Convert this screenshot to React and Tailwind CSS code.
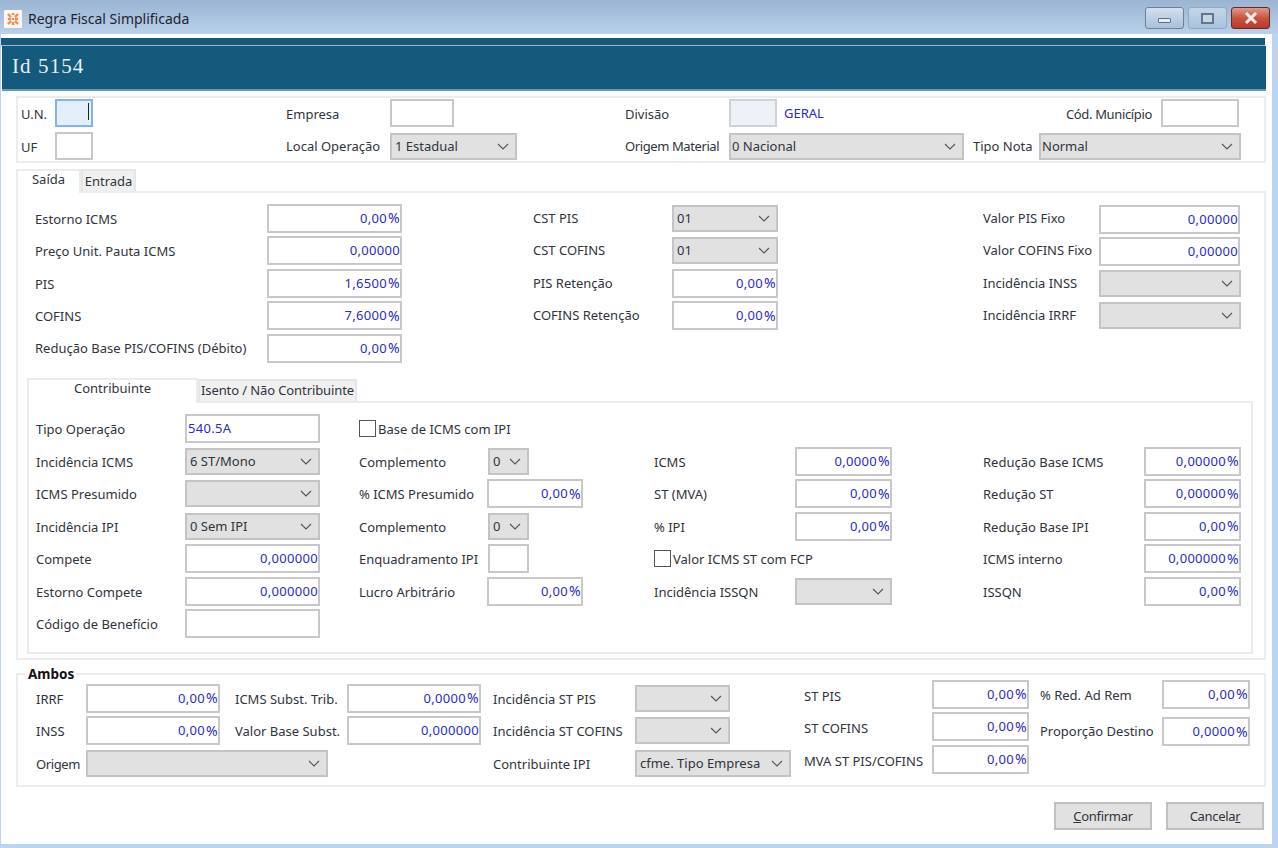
import React from "react";

const Chevron = () => (
  <svg width="12" height="7" viewBox="0 0 12 7" className="shrink-0" fill="none" stroke="#555" strokeWidth="1.1">
    <path d="M1 1l5 5 5-5" />
  </svg>
);

const fmt = (value) =>
  typeof value === "string" && value.endsWith("%") ? (
    <>
      {value.slice(0, -1)}
      <span className="ml-[1px] text-[14px]">%</span>
    </>
  ) : (
    value
  );

const Inp = ({ w, h = "h-[29px]", value, left }) => (
  <div className={`${w} ${h} shrink-0 bg-white border-2 border-[#c8c8c8] flex items-center text-[#2b2bc4] tracking-[0.3px] ${left ? "justify-start pl-[1px]" : "justify-end"}`}>
    {fmt(value)}
  </div>
);

const Sel = ({ w, h = "h-[27px]", value, tx = "pl-[3px]" }) => (
  <div className={`${w} ${h} ${tx} shrink-0 bg-[#e1e1e1] border-2 border-[#c4c4c4] flex items-center justify-between pr-[6px] text-[#30343c]`}>
    <span>{value}</span>
    <Chevron />
  </div>
);

const Row = ({ lw, label, children }) => (
  <div className="flex items-center h-[32.5px]">
    <div className={`${lw} shrink-0 whitespace-nowrap mt-[2px]`}>{label}</div>
    {children}
  </div>
);

const Row0 = ({ lw, label, children }) => (
  <div className="flex items-center h-[32.5px]">
    <div className={`${lw} shrink-0 whitespace-nowrap`}>{label}</div>
    {children}
  </div>
);

const Check = ({ label }) => (
  <div className="flex items-center h-[32.5px] gap-[2px]">
    <div className="w-[17px] h-[17px] bg-white border border-[#555]" />
    <span className="mt-[2px]">{label}</span>
  </div>
);

const Btn = ({ children }) => (
  <div className="w-[98px] h-[28px] bg-[#e1e1e1] border-2 border-[#c0c0c0] flex items-center justify-center tracking-[-0.3px]">{children}</div>
);

const WinBtn = ({ children, cls }) => (
  <div className={`w-[39px] h-[22px] rounded-[3px] border flex items-center justify-center ${cls}`}>{children}</div>
);

export default function App() {
  return (
    <div className="w-[1278px] h-[848px] flex flex-col bg-[#bcd4ee] overflow-hidden text-[13px] leading-none text-[#30343c] font-['Noto_Sans','Open_Sans',sans-serif]">
      {/* title bar */}
      <div className="h-[34px] shrink-0 flex items-center justify-between pl-[4px] pr-[8px] pt-[4px] bg-gradient-to-b from-[#9ab4d2] to-[#b9d1ea]">
        <div className="flex items-center gap-[6px]">
          <svg width="18" height="18" viewBox="0 0 18 18">
            <rect width="18" height="18" rx="1" fill="#fbf7f2" />
            <path d="M4 4l3 3M14 4l-3 3M9 8v2M4 9h3M11 9h3M4 14l3-3M14 14l-3-3M9 3v2M9 12v3" stroke="#f58a4a" strokeWidth="2.4" />
          </svg>
          <span className="text-[14px] text-[#1f2430]">Regra Fiscal Simplificada</span>
        </div>
        <div className="flex items-center gap-[4px] -mt-[2px]">
          <WinBtn cls="bg-gradient-to-b from-[#d3e0ef] to-[#a9c0da] border-[#6f8199]">
            <div className="w-[13px] h-[5px] mt-[5px] bg-[#e8edf3] border border-[#5f6e80] rounded-[1px]" />
          </WinBtn>
          <WinBtn cls="bg-gradient-to-b from-[#c4d5e8] to-[#a9c3df] border-[#94a9c1]">
            <div className="w-[13px] h-[11px] border-2 border-[#66768a] bg-[#c9d6e4]" />
          </WinBtn>
          <WinBtn cls="bg-gradient-to-b from-[#dd9a8c] via-[#c9533f] to-[#b83a28] border-[#5d2b2b]">
            <svg width="14" height="12" viewBox="0 0 14 12" stroke="#f1eeee" strokeWidth="3" fill="none">
              <path d="M2 1l10 10M12 1L2 11" />
            </svg>
          </WinBtn>
        </div>
      </div>

      {/* body */}
      <div className="flex-1 ml-[1px] mr-[6px] mb-[4px] bg-white flex flex-col pt-[4px]">
        <div className="w-[1264px] h-[7px] bg-[#135a7c]" />
        <div className="w-[1264px] h-[1px] bg-[#9fb5c2]" />
        <div className="w-[1264px] h-[45px] ml-[1px] bg-[#135a7c] border-b-[2px] border-[#6b9ab0] flex items-center pl-[10px] pb-[2px] text-[21px] text-[#e9eff3] font-['Liberation_Serif','DejaVu_Serif',serif] tracking-[1.1px]">
          Id 5154
        </div>

        {/* top panel */}
        <div className="ml-[15px] mt-[5px] w-[1250px] h-[67px] border-2 border-[#ececec] flex pl-[3px] pt-[1px]">
          <div className="w-[267px] shrink-0 flex flex-col gap-[5px]">
            <div className="flex items-center h-[28px]">
              <div className="w-[34px] mt-[2px]">U.N.</div>
              <div className="w-[38px] h-[28px] bg-[#e3effc] border-2 border-[#80b5ea] flex items-center justify-end pr-[2px]">
                <div className="w-[1px] h-[17px] bg-[#222] -mt-[3px]" />
              </div>
            </div>
            <div className="flex items-center h-[28px]">
              <div className="w-[34px] mt-[2px]">UF</div>
              <Inp w="w-[38px]" h="h-[28px]" />
            </div>
          </div>
          <div className="w-[337px] ml-[-2px] shrink-0 flex flex-col gap-[5px]">
            <div className="flex items-center h-[28px]">
              <div className="w-[104px] mt-[2px]">Empresa</div>
              <Inp w="w-[64px]" h="h-[28px]" />
            </div>
            <div className="flex items-center h-[28px]">
              <div className="w-[104px]">Local Operação</div>
              <Sel w="w-[127px]" value="1 Estadual" />
            </div>
          </div>
          <div className="w-[348px] ml-[2px] shrink-0 flex flex-col gap-[5px]">
            <div className="flex items-center h-[28px]">
              <div className="w-[104px] mt-[2px]">Divisão</div>
              <div className="w-[48px] h-[28px] bg-[#eef1f8] border-2 border-[#cdd3dc]" />
              <span className="ml-[7px] text-[#2b2bc4]">GERAL</span>
            </div>
            <div className="flex items-center h-[28px]">
              <div className="w-[104px] whitespace-nowrap tracking-[-0.4px]">Origem Material</div>
              <Sel w="w-[235px]" value="0 Nacional" tx="pl-[1px]" />
            </div>
          </div>
          <div className="flex-1 flex flex-col gap-[5px]">
            <div className="flex items-center justify-end h-[28px] pr-[25px]">
              <div className="mr-[9px] mt-[2px] tracking-[-0.35px]">Cód. Município</div>
              <Inp w="w-[78px]" h="h-[28px]" />
            </div>
            <div className="flex items-center h-[28px]">
              <div className="w-[66px] whitespace-nowrap">Tipo Nota</div>
              <Sel w="w-[202px]" value="Normal" tx="pl-[1px]" />
            </div>
          </div>
        </div>

        {/* Saída / Entrada */}
        <div className="ml-[15px] mt-[4px] w-[1250px] flex items-end h-[24px]">
          <div className="w-[65px] h-[24px] bg-white border-2 border-b-0 border-[#ececec] flex items-center justify-center pb-[5px] relative z-10 -mb-[2px]">Saída</div>
          <div className="w-[55px] h-[22px] bg-[#f0f0f0] border-2 border-b-0 border-[#e6e6e6] flex items-center justify-center">Entrada</div>
        </div>
        <div className="ml-[15px] w-[1250px] h-[469px] border-2 border-[#ececec] pt-[9px]">
          <div className="flex pl-[17px]">
            <div className="w-[498px] shrink-0">
              <Row lw="w-[232px]" label="Estorno ICMS"><Inp w="w-[135px]" value="0,00%" /></Row>
              <Row lw="w-[232px]" label="Preço Unit. Pauta ICMS"><Inp w="w-[135px]" value="0,00000" /></Row>
              <Row lw="w-[232px]" label="PIS"><Inp w="w-[135px]" value="1,6500%" /></Row>
              <Row lw="w-[232px]" label="COFINS"><Inp w="w-[135px]" value="7,6000%" /></Row>
              <Row0 lw="w-[232px]" label="Redução Base PIS/COFINS (Débito)"><Inp w="w-[135px]" value="0,00%" /></Row0>
            </div>
            <div className="w-[450px] shrink-0">
              <Row0 lw="w-[139px]" label="CST PIS"><Sel w="w-[106px]" value="01" /></Row0>
              <Row0 lw="w-[139px]" label="CST COFINS"><Sel w="w-[106px]" value="01" /></Row0>
              <Row0 lw="w-[139px]" label="PIS Retenção"><Inp w="w-[106px]" value="0,00%" /></Row0>
              <Row0 lw="w-[139px]" label="COFINS Retenção"><Inp w="w-[106px]" value="0,00%" /></Row0>
            </div>
            <div className="flex-1">
              <Row0 lw="w-[116px]" label="Valor PIS Fixo"><Inp w="w-[141px] mt-[2px]" value="0,00000" /></Row0>
              <Row0 lw="w-[116px]" label="Valor COFINS Fixo"><Inp w="w-[141px] mt-[2px]" value="0,00000" /></Row0>
              <Row0 lw="w-[116px]" label="Incidência INSS"><Sel w="w-[142px]" /></Row0>
              <Row0 lw="w-[116px]" label="Incidência IRRF"><Sel w="w-[142px]" /></Row0>
            </div>
          </div>

          {/* inner tabs */}
          <div className="ml-[9px] mt-[11px] flex items-end h-[25px]">
            <div className="w-[171px] h-[25px] bg-white border-2 border-b-0 border-[#ececec] flex items-center justify-center pb-[5px] relative z-10 -mb-[2px]">Contribuinte</div>
            <div className="w-[159px] h-[22px] bg-[#f0f0f0] border-2 border-b-0 border-[#e6e6e6] flex items-center justify-center whitespace-nowrap tracking-[-0.1px]">Isento / Não Contribuinte</div>
          </div>
          <div className="ml-[9px] w-[1226px] h-[253px] border-2 border-[#ececec] pt-[10px] pl-[7px] flex">
            <div className="w-[323px] shrink-0">
              <Row lw="w-[149px]" label="Tipo Operação"><Inp w="w-[135px]" value="540.5A" left /></Row>
              <Row lw="w-[149px]" label="Incidência ICMS"><Sel w="w-[135px]" value="6 ST/Mono" /></Row>
              <Row lw="w-[149px]" label="ICMS Presumido"><Sel w="w-[135px]" /></Row>
              <Row lw="w-[149px]" label="Incidência IPI"><Sel w="w-[135px]" value="0 Sem IPI" /></Row>
              <Row lw="w-[149px]" label="Compete"><Inp w="w-[135px]" value="0,000000" /></Row>
              <Row lw="w-[149px]" label="Estorno Compete"><Inp w="w-[135px]" value="0,000000" /></Row>
              <Row lw="w-[149px]" label="Código de Benefício"><Inp w="w-[135px]" /></Row>
            </div>
            <div className="w-[295px] shrink-0">
              <Check label="Base de ICMS com IPI" />
              <Row lw="w-[129px]" label="Complemento"><Sel w="w-[41px]" value="0" /></Row>
              <Row lw="w-[128px]" label="% ICMS Presumido"><Inp w="w-[96px]" value="0,00%" /></Row>
              <Row lw="w-[129px]" label="Complemento"><Sel w="w-[41px]" value="0" /></Row>
              <Row lw="w-[129px]" label="Enquadramento IPI"><Inp w="w-[41px]" /></Row>
              <Row lw="w-[128px]" label="Lucro Arbitrário"><Inp w="w-[96px]" value="0,00%" /></Row>
            </div>
            <div className="w-[329px] shrink-0">
              <div className="h-[32.5px]" />
              <Row lw="w-[141px]" label="ICMS"><Inp w="w-[97px]" value="0,0000%" /></Row>
              <Row lw="w-[141px]" label="ST (MVA)"><Inp w="w-[97px]" value="0,00%" /></Row>
              <Row lw="w-[141px]" label="% IPI"><Inp w="w-[97px]" value="0,00%" /></Row>
              <Check label="Valor ICMS ST com FCP" />
              <Row lw="w-[141px]" label="Incidência ISSQN"><Sel w="w-[97px]" /></Row>
            </div>
            <div className="flex-1">
              <div className="h-[32.5px]" />
              <Row lw="w-[161px]" label="Redução Base ICMS"><Inp w="w-[97px]" value="0,00000%" /></Row>
              <Row lw="w-[161px]" label="Redução ST"><Inp w="w-[97px]" value="0,00000%" /></Row>
              <Row lw="w-[161px]" label="Redução Base IPI"><Inp w="w-[97px]" value="0,00%" /></Row>
              <Row lw="w-[161px]" label="ICMS interno"><Inp w="w-[97px]" value="0,000000%" /></Row>
              <Row lw="w-[161px]" label="ISSQN"><Inp w="w-[97px]" value="0,00%" /></Row>
            </div>
          </div>
        </div>

        {/* Ambos */}
        <div className="ml-[15px] mt-[13px] w-[1250px] h-[114px] border-2 border-[#ececec] relative flex pl-[18px] pt-[5px]">
          <div className="absolute -top-[7px] left-[7px] px-[3px] bg-white font-bold text-[#111] text-[13.5px]">Ambos</div>
          <div className="w-[199px] shrink-0 mt-[2px]">
            <Row lw="w-[50px]" label="IRRF"><Inp w="w-[134px]" value="0,00%" /></Row>
            <Row lw="w-[50px]" label="INSS"><Inp w="w-[134px]" value="0,00%" /></Row>
            <Row lw="w-[50px] tracking-[-0.4px]" label="Origem"><Sel w="w-[242px]" /></Row>
          </div>
          <div className="w-[258px] shrink-0 mt-[2px]">
            <Row lw="w-[112px]" label="ICMS Subst. Trib."><Inp w="w-[134px]" value="0,0000%" /></Row>
            <Row lw="w-[112px]" label="Valor Base Subst."><Inp w="w-[134px]" value="0,000000" /></Row>
          </div>
          <div className="w-[311px] shrink-0 mt-[2px]">
            <Row lw="w-[142px]" label="Incidência ST PIS"><Sel w="w-[95px]" /></Row>
            <Row lw="w-[142px]" label="Incidência ST COFINS"><Sel w="w-[95px]" /></Row>
            <Row lw="w-[142px]" label="Contribuinte IPI"><Sel w="w-[156px]" value="cfme. Tipo Empresa" /></Row>
          </div>
          <div className="w-[236px] shrink-0">
            <Row0 lw="w-[128px]" label="ST PIS"><Inp w="w-[97px] -mt-[4px]" value="0,00%" /></Row0>
            <Row0 lw="w-[128px]" label="ST COFINS"><Inp w="w-[97px] -mt-[4px]" value="0,00%" /></Row0>
            <Row0 lw="w-[128px]" label="MVA ST PIS/COFINS"><Inp w="w-[97px] -mt-[4px]" value="0,00%" /></Row0>
          </div>
          <div className="flex-1 -mt-[1px]">
            <Row0 lw="w-[122px]" label="% Red. Ad Rem"><Inp w="w-[88px] -mt-[2px]" value="0,00%" /></Row0>
            <div className="mt-[4px]">
              <Row0 lw="w-[122px]" label="Proporção Destino"><Inp w="w-[88px]" value="0,0000%" /></Row0>
            </div>
          </div>
        </div>

        {/* buttons */}
        <div className="mt-[15px] flex justify-end gap-[14px] w-[1263px]">
          <Btn><span><u>C</u>onfirmar</span></Btn>
          <Btn><span>Cancela<u>r</u></span></Btn>
        </div>
      </div>
    </div>
  );
}
